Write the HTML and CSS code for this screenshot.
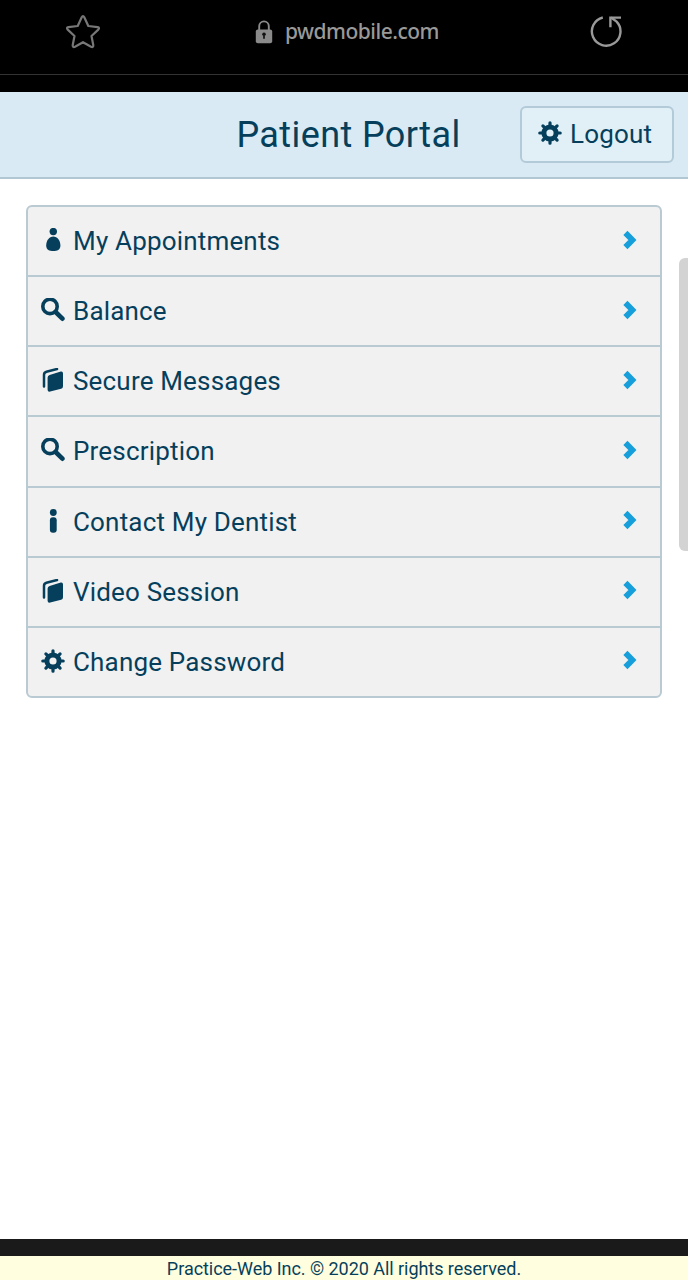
FILE: index.html
```html
<!DOCTYPE html>
<html lang="en">
<head>
    <meta charset="UTF-8">
    <meta name="viewport" content="width=device-width, initial-scale=1.0">
    <title>Patient Portal</title>
    <link rel="stylesheet" href="styles.css">
</head>
<body>
    <!-- Shared icons -->
    <svg class="sprite">
        <symbol id="gear" viewBox="0 0 24 24">
            <circle cx="12" cy="12" r="6.1" fill="none" stroke="currentColor" stroke-width="5"/>
            <path d="M12 1.8v3M12 19.2v3M1.8 12h3M19.2 12h3M4.9 4.9l2 2M17.1 17.1l2 2M4.9 19.1l2-2M17.1 6.9l2-2" stroke="currentColor" stroke-width="3.2" stroke-linecap="round"/>
        </symbol>
        <symbol id="user" viewBox="0 0 24 24">
            <circle cx="12.3" cy="3.6" r="3.7" fill="currentColor"/>
            <path d="M12.3 8.5C8.2 8.5 5.2 12.8 5.2 17.4C5.2 22 8.5 23 12.3 23S19.4 22 19.4 17.4C19.4 12.8 16.4 8.5 12.3 8.5z" fill="currentColor"/>
        </symbol>
        <symbol id="search" viewBox="0 0 24 24">
            <circle cx="9" cy="8.4" r="7.2" fill="none" stroke="currentColor" stroke-width="3.6"/>
            <path d="M14.6 14l6.8 6.7" stroke="currentColor" stroke-width="4.6" stroke-linecap="round"/>
        </symbol>
        <symbol id="book" viewBox="0 0 24 24">
            <path d="M3 18.6V6.8Q3 4.5 5.4 3.7L16 1" fill="none" stroke="currentColor" stroke-width="2.5" stroke-linecap="round"/>
            <path d="M8.6 6.9L19.8 3.6Q22 3.2 22 5.4V18.2Q22 20.2 20.1 20.7L9.2 23.6Q6.6 24.1 6.6 21.8V9.6Q6.6 7.6 8.6 6.9z" fill="currentColor"/>
        </symbol>
        <symbol id="info" viewBox="0 0 24 24">
            <circle cx="12.3" cy="3.5" r="3.4" fill="currentColor"/>
            <rect x="8.9" y="8.2" width="6.8" height="15.6" rx="3" fill="currentColor"/>
        </symbol>
        <symbol id="arrow" viewBox="0 0 14 20">
            <path d="M2.4 2.9L9.4 10L2.4 17.1" fill="none" stroke="currentColor" stroke-width="5.8"/>
        </symbol>
    </svg>

    <div class="browser-bar">
        <svg class="star" viewBox="0 0 36 36">
            <path d="M16.7 3.2Q18 1 19.3 3.2L23.3 12L32.6 13.1Q35 13.6 33.3 15.6L26.5 22L28.3 31.2Q28.4 33.8 26 32.7L18 28.2L10 32.7Q7.6 33.8 7.7 31.2L9.5 22L2.7 15.6Q1 13.6 3.4 13.1L12.7 12z" fill="none" stroke="#777" stroke-width="2.2" stroke-linejoin="round"/>
        </svg>
        <div class="address">
            <svg class="lock" viewBox="0 0 18 24">
                <path d="M4.2 11V6.2a4.8 4.8 0 0 1 9.6 0V11" fill="none" stroke="#8a8a8a" stroke-width="1.9"/>
                <rect x="0.8" y="9.4" width="16.4" height="13.8" rx="2" fill="#8a8a8a"/>
                <path d="M9 18.8v-3.4" stroke="#111" stroke-width="1.7"/>
                <circle cx="9" cy="14.2" r="1.8" fill="#111"/>
            </svg>
            <span>pwdmobile.com</span>
        </div>
        <svg class="reload" viewBox="0 0 34 34">
            <path d="M13.8 3.5A14.3 14.3 0 1 0 27.6 7.6L22 3.6" fill="none" stroke="#999" stroke-width="2.4"/>
            <path d="M32 3.6H21.4V13.2" fill="none" stroke="#999" stroke-width="2.4"/>
        </svg>
    </div>

    <header class="header">
        <h1>Patient Portal</h1>
        <a class="logout" href="#"><svg class="icon"><use href="#gear"/></svg>Logout</a>
    </header>

    <main class="content">
        <ul class="menu">
            <li><svg class="icon"><use href="#user"/></svg><span>My Appointments</span><svg class="arrow"><use href="#arrow"/></svg></li>
            <li><svg class="icon"><use href="#search"/></svg><span>Balance</span><svg class="arrow"><use href="#arrow"/></svg></li>
            <li><svg class="icon"><use href="#book"/></svg><span>Secure Messages</span><svg class="arrow"><use href="#arrow"/></svg></li>
            <li><svg class="icon"><use href="#search"/></svg><span>Prescription</span><svg class="arrow"><use href="#arrow"/></svg></li>
            <li><svg class="icon"><use href="#info"/></svg><span>Contact My Dentist</span><svg class="arrow"><use href="#arrow"/></svg></li>
            <li><svg class="icon"><use href="#book"/></svg><span>Video Session</span><svg class="arrow"><use href="#arrow"/></svg></li>
            <li><svg class="icon"><use href="#gear"/></svg><span>Change Password</span><svg class="arrow"><use href="#arrow"/></svg></li>
        </ul>
        <div class="scrollbar"></div>
    </main>

    <footer class="footer">Practice-Web Inc. © 2020 All rights reserved.</footer>
</body>
</html>
```

FILE: styles.css
```css
* {
    box-sizing: border-box;
}
body {
    margin: 0;
    height: 1280px;
    display: flex;
    flex-direction: column;
    overflow: hidden;
    background: #fff;
    color: #063f5c;
    font-family: Roboto, "Liberation Sans", sans-serif;
}
.sprite {
    display: none;
}
.icon {
    width: 24px;
    height: 24px;
    flex: none;
    margin-bottom: 2px;
    overflow: visible;
}

/* Browser bar */
.browser-bar {
    height: 92px;
    padding: 0 65px;
    display: grid;
    grid-template-columns: 1fr auto 1fr;
    align-items: start;
    background: linear-gradient(#333, #333) 0 74px / 100% 1px no-repeat #000;
}
.star {
    width: 36px;
    height: 36px;
    margin-top: 14px;
}
.address {
    display: flex;
    gap: 12px;
    margin-top: 17px;
    padding-left: 6px;
    color: #999;
    font-family: "Noto Sans", sans-serif;
    font-size: 21px;
    font-weight: 500;
    letter-spacing: -0.5px;
    line-height: 29px;
}
.lock {
    width: 18px;
    height: 24px;
    margin-top: 3px;
}
.reload {
    width: 34px;
    height: 34px;
    margin-top: 14px;
    justify-self: end;
}

/* Page header */
.header {
    height: 87px;
    padding: 0 14px 1px;
    display: grid;
    grid-template-columns: 163px 1fr 154px;
    align-items: center;
    background: #d9eaf4;
    border-bottom: 2px solid #b1c8d2;
}
h1 {
    grid-column: 2;
    margin: 1px 0 0;
    text-align: center;
    font-size: 36px;
    font-weight: normal;
    letter-spacing: 0.4px;
}
.logout {
    height: 57px;
    display: flex;
    align-items: center;
    gap: 8px;
    padding-left: 16px;
    border: 2px solid #b3cbd8;
    border-radius: 6px;
    background: #e1eff6;
    color: inherit;
    font-size: 26px;
    letter-spacing: 0.2px;
    text-decoration: none;
}

/* Menu */
.content {
    flex: 1;
    display: flex;
    align-items: flex-start;
    justify-content: space-between;
    padding: 26px 0 0 26px;
}
.menu {
    width: 636px;
    height: 493px;
    margin: 0;
    padding: 0;
    display: flex;
    flex-direction: column;
    list-style: none;
    border: 2px solid #b9cad3;
    border-radius: 6px;
    background: #f1f1f1;
    font-size: 26px;
    letter-spacing: 0.18px;
}
.menu li {
    flex: 1;
    display: flex;
    align-items: center;
    gap: 8px;
    padding: 0 23px 0 13px;
}
.menu li + li {
    border-top: 2px solid #b9cad3;
}
.menu span {
    flex: 1;
}
.arrow {
    width: 14px;
    height: 20px;
    margin-bottom: 3px;
    color: #169fda;
}
.scrollbar {
    width: 9px;
    height: 293px;
    margin-top: 53px;
    border-radius: 6px 0 0 6px;
    background: #d3d3d3;
}

/* Footer */
.footer {
    height: 41px;
    border-top: 17px solid #1a1a1a;
    background: #ffffdf;
    text-align: center;
    font-size: 18px;
    letter-spacing: -0.04px;
    line-height: 26px;
}
```
